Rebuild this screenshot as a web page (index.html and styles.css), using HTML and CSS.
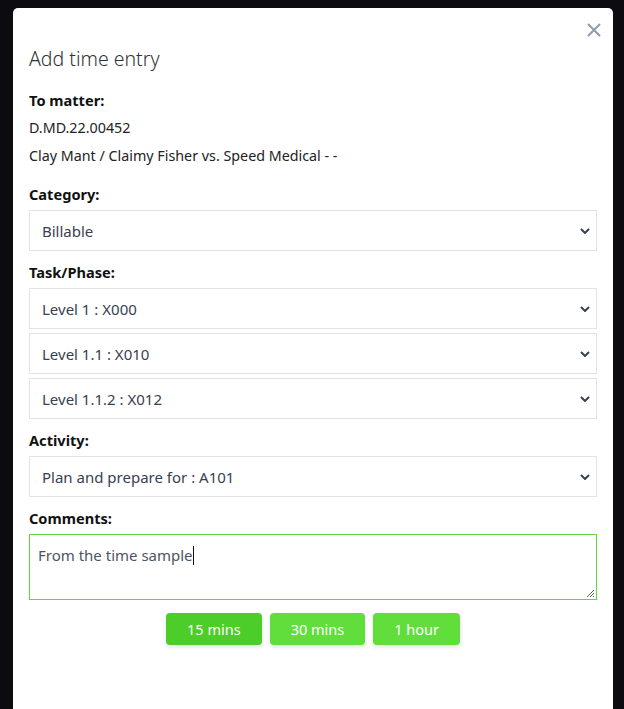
FILE: index.html
```html
<!DOCTYPE html>
<html>
<head>
<meta charset="utf-8">
<link rel="stylesheet" href="styles.css">
</head>
<body>
<div class="modal">
  <button class="close" aria-label="Close">
    <svg width="14" height="14" viewBox="0 0 14 14"><path d="M1.5 1.5 L12.5 12.5 M12.5 1.5 L1.5 12.5" stroke="#8f9ab0" stroke-width="2" stroke-linecap="round"/></svg>
  </button>
  <h2 class="title">Add time entry</h2>
  <div class="section matter">
    <div class="label">To matter:</div>
    <div class="text">D.MD.22.00452</div>
    <div class="text">Clay Mant / Claimy Fisher vs. Speed Medical - -</div>
  </div>
  <div class="section">
    <div class="label">Category:</div>
    <div class="select"><span>Billable</span><svg class="chev" viewBox="0 0 10 6"><path d="M1 1 L5 5 L9 1" fill="none" stroke="#374151" stroke-width="2"/></svg></div>
  </div>
  <div class="section">
    <div class="label">Task/Phase:</div>
    <div class="stack">
      <div class="select"><span>Level 1 : X000</span><svg class="chev" viewBox="0 0 10 6"><path d="M1 1 L5 5 L9 1" fill="none" stroke="#374151" stroke-width="2"/></svg></div>
      <div class="select"><span>Level 1.1 : X010</span><svg class="chev" viewBox="0 0 10 6"><path d="M1 1 L5 5 L9 1" fill="none" stroke="#374151" stroke-width="2"/></svg></div>
      <div class="select"><span>Level 1.1.2 : X012</span><svg class="chev" viewBox="0 0 10 6"><path d="M1 1 L5 5 L9 1" fill="none" stroke="#374151" stroke-width="2"/></svg></div>
    </div>
  </div>
  <div class="section">
    <div class="label">Activity:</div>
    <div class="select"><span>Plan and prepare for : A101</span><svg class="chev" viewBox="0 0 10 6"><path d="M1 1 L5 5 L9 1" fill="none" stroke="#374151" stroke-width="2"/></svg></div>
  </div>
  <div class="section">
    <div class="label">Comments:</div>
    <div class="textarea"><span>From the time sample</span><span class="caret"></span>
      <svg class="grip" width="9" height="9" viewBox="0 0 9 9"><path d="M8 1 L1 8 M8 4 L4 8 M8 7 L7 8" stroke="#666" stroke-width="1"/></svg>
    </div>
  </div>
  <div class="buttons">
    <button class="btn active">15 mins</button>
    <button class="btn">30 mins</button>
    <button class="btn">1 hour</button>
  </div>
</div>
</body>
</html>
```
FILE: styles.css
```css
html, body {
  margin: 0;
  padding: 0;
  background: #0b0b10;
  height: 100%;
}
body {
  font-family: "Noto Sans", "Open Sans", sans-serif;
  color: #111;
  padding: 8px 11px 0 13px;
  box-sizing: border-box;
}
.modal {
  position: relative;
  background: #fff;
  border-radius: 5px 5px 0 0;
  height: 100%;
  padding: 36px 16px 0 16px;
  box-sizing: border-box;
  display: flex;
  flex-direction: column;
}
.close {
  position: absolute;
  top: 15px;
  right: 12px;
  border: 0;
  background: none;
  padding: 0;
  width: 14px;
  height: 14px;
}
.close svg { display: block; }
.title {
  margin: 0 0 14px 0;
  font-size: 19.5px;
  font-weight: 300;
  color: #333;
  line-height: 30px;
}
.section {
  display: flex;
  flex-direction: column;
  margin-bottom: 9px;
}
.label {
  font-size: 14.6px;
  font-weight: 700;
  line-height: 24px;
  margin-bottom: 4px;
}
.matter .label { margin-bottom: 2px; }
.text {
  font-size: 14.3px;
  line-height: 28px;
  color: #222;
}
.matter { margin-bottom: 12px; }
.stack {
  display: flex;
  flex-direction: column;
  gap: 4px;
}
.select {
  height: 41px;
  box-sizing: border-box;
  border: 1px solid #e3e3e5;
  display: flex;
  align-items: center;
  justify-content: space-between;
  padding: 0 6px 0 12px;
  font-size: 15px;
  color: #374151;
}
.chev {
  width: 10px;
  height: 6px;
}
.textarea {
  position: relative;
  height: 66px;
  box-sizing: border-box;
  border: 1px solid #62d93e;
  padding: 10px 8px;
  font-size: 15px;
  color: #4b5563;
  line-height: 20px;
}
.caret {
  display: inline-block;
  width: 1px;
  height: 19px;
  background: #111;
  vertical-align: -4px;
}
.grip {
  position: absolute;
  right: 1px;
  bottom: 1px;
}
.buttons {
  display: flex;
  justify-content: center;
  gap: 8px;
  margin-top: 4px;
}
.btn {
  font-family: inherit;
  font-size: 14.5px;
  color: #fff;
  background: #62de3c;
  border: 0;
  border-radius: 4px;
  height: 32px;
  padding: 0 21px;
  box-shadow: 0 2px 4px rgba(0,0,0,0.12);
}
.btn.active { background: #4ccd2a; }
```
